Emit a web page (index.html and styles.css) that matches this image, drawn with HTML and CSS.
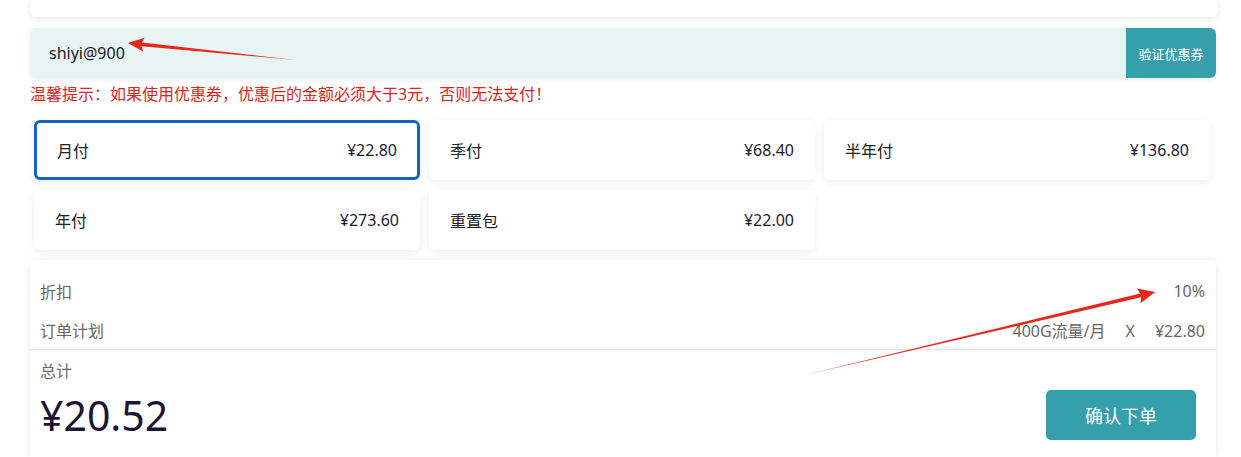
FILE: index.html
```html
<!DOCTYPE html>
<html lang="zh-CN">
<head>
<meta charset="utf-8">
<title>订单确认</title>
<link rel="stylesheet" href="styles.css">
</head>
<body>
<div class="page">
  <div class="top-card"></div>

  <div class="coupon">
    <div class="coupon-input">shiyi@900</div>
    <button class="coupon-btn">验证优惠券</button>
  </div>

  <p class="warning">温馨提示：如果使用优惠券，优惠后的金额必须大于3元，否则无法支付！</p>

  <div class="plans">
    <div class="plan selected"><span>月付</span><span class="price">¥22.80</span></div>
    <div class="plan"><span>季付</span><span class="price">¥68.40</span></div>
    <div class="plan"><span>半年付</span><span class="price">¥136.80</span></div>
    <div class="plan"><span>年付</span><span class="price">¥273.60</span></div>
    <div class="plan"><span>重置包</span><span class="price">¥22.00</span></div>
  </div>

  <div class="summary">
    <div class="rows">
      <div class="row"><span>折扣</span><span>10%</span></div>
      <div class="row"><span>订单计划</span><span>400G流量/月<span class="sep">X</span><span class="sep">¥22.80</span></span></div>
    </div>
    <div class="total-block">
      <div class="total-label">总计</div>
      <div class="total-row">
        <div class="total">¥20.52</div>
        <button class="confirm">确认下单</button>
      </div>
    </div>
  </div>

  <svg class="arrows" width="1241" height="457" viewBox="0 0 1241 457">
    <g transform="translate(295 60) rotate(-174.19)">
      <polygon points="0,0 154,-1.8 152,-7 168,0 152,7 154,1.8" fill="#e8261c"/>
    </g>
    <g transform="translate(805 375) rotate(-13.34)">
      <polygon points="0,0 345,-2 343,-7.5 360,0 343,7.5 345,2" fill="#e8261c"/>
    </g>
  </svg>
</div>
</body>
</html>
```

FILE: styles.css
```css
* { box-sizing: border-box; }

html, body {
  margin: 0;
  padding: 0;
  background: #ffffff;
}

body {
  font-family: "Noto Sans", "Noto Sans CJK SC", sans-serif;
  color: #222;
  width: 1241px;
  height: 457px;
  overflow: hidden;
}

.page {
  position: relative;
  padding-left: 30px;
  width: 1241px;
  height: 457px;
}

.top-card {
  width: 1188px;
  height: 17px;
  background: #fff;
  border-radius: 0 0 6px 6px;
  box-shadow: 0 2px 6px rgba(0, 0, 0, 0.09);
}

.coupon {
  margin-top: 11px;
  width: 1186px;
  height: 50px;
  display: flex;
  border-radius: 6px;
  overflow: hidden;
  box-shadow: 0 2px 6px rgba(0, 0, 0, 0.08);
}

.coupon-input {
  flex: 1;
  background: #e6f4f4;
  padding-left: 19px;
  display: flex;
  align-items: center;
  font-size: 16px;
  color: #1a1a1a;
}

.coupon-btn {
  width: 90px;
  border: none;
  background: #35a0ac;
  color: #fff;
  font-family: "Noto Sans CJK SC", sans-serif;
  font-size: 13px;
  padding: 0;
}

.warning {
  margin: 6px 0 0;
  height: 20px;
  line-height: 20px;
  font-size: 16px;
  color: #d7261e;
}

.plans {
  margin-top: 16px;
  margin-left: 4px;
  width: 1176px;
  display: grid;
  grid-template-columns: repeat(3, 1fr);
  column-gap: 9px;
  row-gap: 10px;
}

.plan {
  height: 60px;
  background: #fff;
  border-radius: 6px;
  box-shadow: 0 2px 8px rgba(0, 0, 0, 0.08);
  display: flex;
  align-items: center;
  justify-content: space-between;
  padding: 0 21px;
  font-size: 16px;
  color: #222;
}

.plan .price { color: #1e1a2e; }

.plan.selected {
  border: 3px solid #1565c0;
  padding: 0 20px;
}

.summary {
  margin-top: 10px;
  width: 1186px;
  height: 197px;
  background: #fff;
  border-radius: 6px 6px 0 0;
  box-shadow: 0 2px 8px rgba(0, 0, 0, 0.09);
}

.rows {
  padding: 11px 11px 0 10px;
  border-bottom: 1px solid #e2e2e2;
}

.row {
  height: 39px;
  display: flex;
  align-items: center;
  justify-content: space-between;
  font-size: 16px;
  color: #666;
}

.sep { margin-left: 20px; }

.total-block {
  padding: 10px 20px 0 10px;
}

.total-label {
  height: 22px;
  line-height: 22px;
  font-size: 16px;
  color: #666;
}

.total-row {
  margin-top: 8px;
  display: flex;
  align-items: center;
  justify-content: space-between;
}

.total {
  font-size: 41px;
  color: #1c1433;
  line-height: 50px;
}

.confirm {
  width: 150px;
  height: 50px;
  border: none;
  border-radius: 5px;
  background: #35a0ac;
  color: #fff;
  font-family: "Noto Sans CJK SC", sans-serif;
  font-size: 18px;
  padding: 0;
}

.arrows {
  position: absolute;
  left: 0;
  top: 0;
  pointer-events: none;
}
```
